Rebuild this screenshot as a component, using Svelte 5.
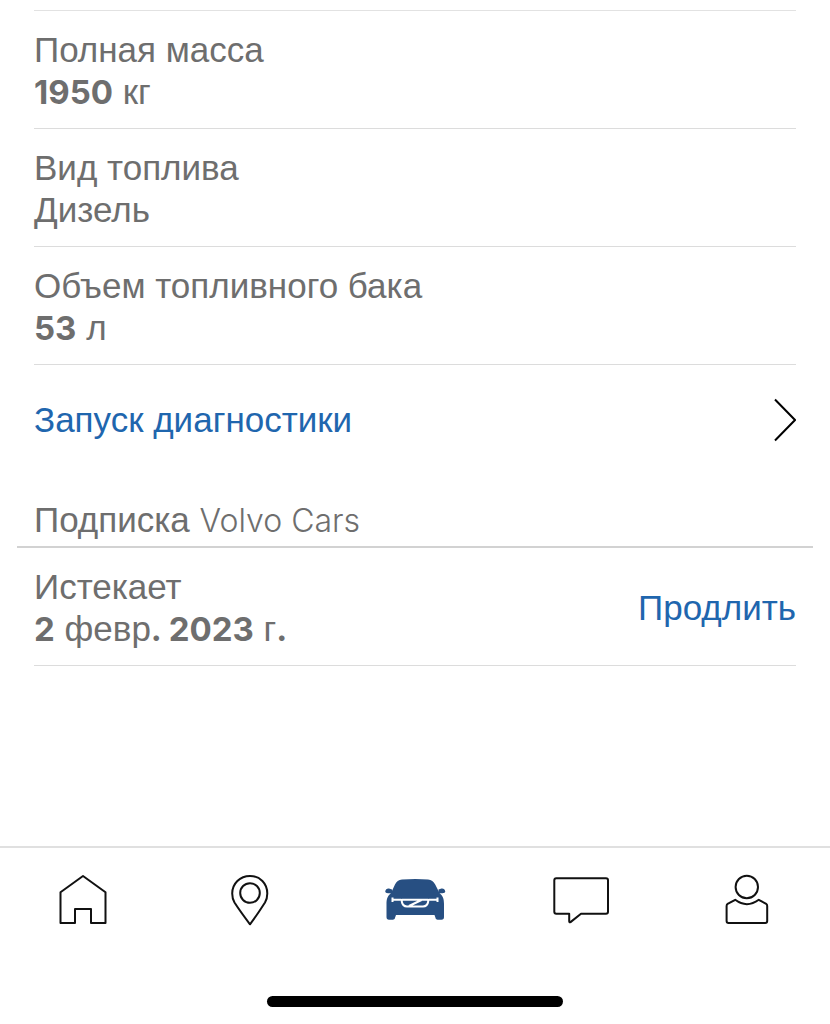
<script lang="ts">
	type Part = { text:string; kind?:'strong' };
	type Spec = { label:string; value:Part[] };

	const specs:Spec[] = [
		{ label: 'Полная масса', value: [{ text: '1950', kind: 'strong' }, { text: ' кг' }] },
		{ label: 'Вид топлива', value: [{ text: 'Дизель' }] },
		{ label: 'Объем топливного бака', value: [{ text: '53', kind: 'strong' }, { text: ' л' }] }
	];

	const expires:Spec = {
		label: 'Истекает',
		value: [
			{ text: '2', kind: 'strong' },
			{ text: ' февр' },
			{ text: '. 2023', kind: 'strong' },
			{ text: ' г' },
			{ text: '.', kind: 'strong' }
		]
	};

	const tabs = [
		{ id: 'home', title: 'Главная' },
		{ id: 'map', title: 'Карта' },
		{ id: 'car', title: 'Автомобиль' },
		{ id: 'chat', title: 'Сообщения' },
		{ id: 'profile', title: 'Профиль' }
	];

	let current:string = $state('car');
</script>

{#snippet entry(spec:Spec)}
	<dl>
		<dt>{spec.label}</dt>
		<dd>{#each spec.value as part}{#if part.kind == 'strong'}<strong>{part.text}</strong>{:else}{part.text}{/if}{/each}</dd>
	</dl>
{/snippet}

<div class="page">
	<main>
		<section class="specs">
			{#each specs as spec}
				<div class="row">{@render entry(spec)}</div>
			{/each}
			<a class="diagnostics" href="#diagnostics">
				<span>Запуск диагностики</span>
				<svg class="chevron" viewBox="0 0 24 44" aria-hidden="true">
					<path d="M3 1.5 L23 22 L3 42.5" />
				</svg>
			</a>
		</section>

		<section class="subscription">
			<h2>Подписка <span class="brand">Volvo Cars</span></h2>
			<div class="row">
				{@render entry(expires)}
				<button class="renew" type="button">Продлить</button>
			</div>
		</section>
	</main>

	<footer>
		<nav>
			{#each tabs as tab}
				<button type="button" aria-label={tab.title} class:active={current == tab.id}
					onclick={() => current = tab.id}>
					<svg viewBox="0 0 64 64" aria-hidden="true">
						{#if tab.id == 'home'}
							<path d="M32 8 L54.5 24.3 V55 H40 V41 H24 V55 H9.5 V24.3 Z" />
						{:else if tab.id == 'map'}
							<path d="M33 56.3 C29 51 21 40 17.5 34.5 C15.8 31.6 15.2 28.5 15.2 25.5 C15.2 15.5 23 7.9 33 7.9 C43 7.9 50.3 15.5 50.3 25.5 C50.3 28.5 49.7 31.6 48 34.5 C44.5 40 37 51 33 56.3 Z" />
							<circle cx="33" cy="25" r="9.8" />
						{:else if tab.id == 'car'}
							<path class="solid" d="M19 11.6 C28 10.8 37 10.8 45 11.6 C48.5 12 50.5 13.5 52.2 16.5 L56.5 25 C60 28 61 31 61 36 V49 Q61 51.8 58.5 51.8 H54.5 Q52.5 51.8 52.2 49 L51.5 47 H13 L12.3 49 Q12 51.8 10 51.8 H6 Q3.5 51.8 3.5 49 V36 C3.5 31 4.5 28 8 25 L12 16.5 C13.5 13.5 15.5 12 19 11.6 Z" />
							<path class="solid" d="M2.2 23.5 Q2.8 20.3 6 20.6 L9 21.5 V25.2 H5 Q2.2 25.2 2.2 23.5 Z M62.3 23.5 Q61.7 20.3 58.5 20.6 L55.5 21.5 V25.2 H59.5 Q62.3 25.2 62.3 23.5 Z" />
							<path class="grille" d="M9.5 29.5 V34 M9.5 31.8 H18 M54.5 29.5 V34 M54.5 31.8 H46 M18.8 31.8 H45.2 V33.5 Q44.5 38.4 40 38.4 H24 Q19.5 38.4 18.8 33.5 Z M26 38 L38.5 32" />
						{:else if tab.id == 'chat'}
							<path d="M7.3 10.3 H57 Q59 10.3 59 12.3 V43.7 Q59 45.7 57 45.7 H32 L21.5 54.1 Q20.2 54.8 20.2 53.2 V45.7 H7.3 Q5.3 45.7 5.3 43.7 V12.3 Q5.3 10.3 7.3 10.3 Z" />
						{:else}
							<circle cx="31.8" cy="19" r="11.2" />
							<path d="M20.2 31.8 Q31.8 40.5 43.8 31.8 L51.2 35.9 Q52.2 36.5 52.2 37.9 V53 Q52.2 55 50.2 55 H13.6 Q11.6 55 11.6 53 V37.9 Q11.6 36.5 12.6 35.9 Z" />
						{/if}
					</svg>
				</button>
			{/each}
		</nav>
		<div class="indicator"></div>
	</footer>
</div>

<style>
	:global(body) {
		background: #fff;
	}
	.page {
		min-height: 100vh;
		display: flex;
		flex-direction: column;
		color: #6e6e6e;
		font: 35px/42px "Liberation Sans", Arial, sans-serif;
	}
	main {
		flex: 1;
		padding-top: 10px;
	}
	.specs {
		margin: 0 34px;
		border-top: 1px solid #e2e2e2;
	}
	.row {
		display: flex;
		align-items: center;
		justify-content: space-between;
		padding: 18px 0 15px;
		border-bottom: 1px solid #dcdcdc;
	}
	dl, dd {
		margin: 0;
	}
	strong {
		font: 700 33px/1 Inter, "Liberation Sans", sans-serif;
	}
	.diagnostics {
		display: flex;
		align-items: center;
		justify-content: space-between;
		padding: 33px 0 29px;
		color: #1f66ae;
		text-decoration: none;
	}
	.chevron {
		width: 24px;
		height: 44px;
		fill: none;
		stroke: #000;
		stroke-width: 2;
	}
	.subscription {
		margin: 0 17px;
	}
	h2 {
		margin: 0;
		padding: 28px 17px 5px;
		border-bottom: 2px solid #d2d2d2;
		font-size: 35px;
		font-weight: 400;
	}
	.brand {
		font: 300 32px/1 Inter, "Liberation Sans", sans-serif;
	}
	.subscription .row {
		margin: 0 17px;
	}
	button {
		padding: 0;
		border: 0;
		background: none;
		font: inherit;
		cursor: pointer;
	}
	.renew {
		color: #1f66ae;
	}
	footer {
		padding-bottom: 17px;
		border-top: 2px solid #e0e0e0;
	}
	nav {
		display: grid;
		grid-template-columns: repeat(5, 1fr);
		padding: 20px 0 64px;
	}
	nav button {
		display: flex;
		justify-content: center;
		color: #111;
	}
	nav button.active {
		color: #274f82;
	}
	nav svg {
		width: 64px;
		height: 64px;
		fill: none;
		stroke: currentColor;
		stroke-width: 2;
		stroke-linejoin: round;
	}
	nav .solid {
		fill: currentColor;
		stroke: none;
	}
	nav .grille {
		stroke: #fff;
		stroke-width: 2;
	}
	.indicator {
		width: 296px;
		height: 11px;
		margin: 0 auto;
		border-radius: 6px;
		background: #000;
	}
</style>
